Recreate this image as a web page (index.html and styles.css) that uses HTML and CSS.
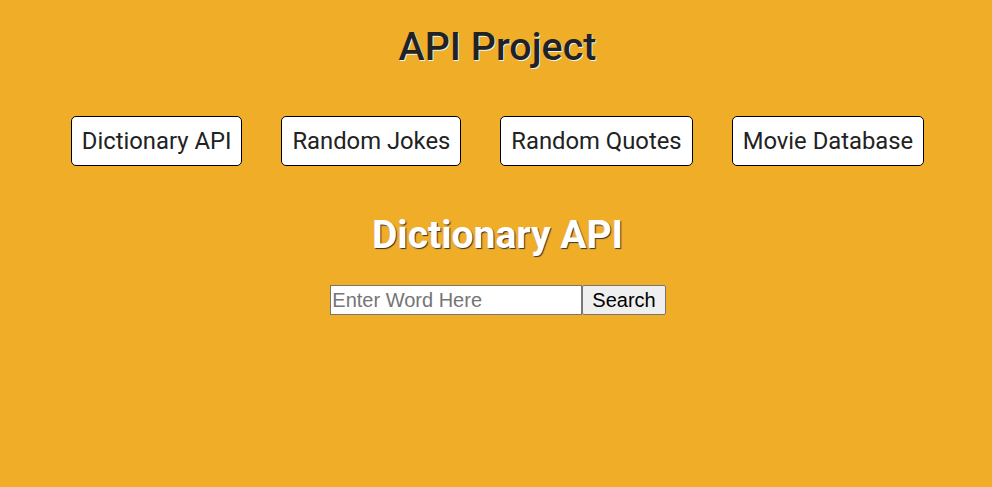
FILE: index.html
```html
<!DOCTYPE html>
<html>
<head>
<meta charset="utf-8">
<link rel="stylesheet" href="styles.css">
</head>
<body>
<h1 class="title">API Project</h1>
<nav class="nav">
  <button class="nav-btn">Dictionary API</button>
  <button class="nav-btn">Random Jokes</button>
  <button class="nav-btn">Random Quotes</button>
  <button class="nav-btn">Movie Database</button>
</nav>
<h2 class="section-title">Dictionary API</h2>
<div class="search">
  <input class="search-input" type="text" placeholder="Enter Word Here"><button class="search-btn">Search</button>
</div>
</body>
</html>
```

FILE: styles.css
```css
html, body {
  margin: 0;
  padding: 0;
  background: #f0ae28;
  height: 100%;
}
body {
  font-family: Roboto, "Liberation Sans", sans-serif;
  text-align: center;
}
.title {
  margin: 0;
  padding-top: 24px;
  padding-left: 3px;
  font-size: 39.4px;
  font-weight: 500;
  line-height: 46px;
  color: #222;
  text-shadow: 1px 1px 0 #e8f4ff;
}
.nav {
  display: flex;
  justify-content: center;
  gap: 39px;
  margin-top: 46px;
  padding-left: 3px;
}
.nav-btn {
  font-family: Roboto, sans-serif;
  font-size: 23.8px;
  line-height: 28px;
  color: #222;
  background: #fff;
  border: 1px solid #000;
  border-radius: 5px;
  padding: 10px 10px;
}
.section-title {
  margin: 46px 0 0;
  padding-left: 3px;
  font-size: 39px;
  line-height: 46px;
  font-weight: 700;
  color: #fff;
  text-shadow: 1px 1px 1px #333;
}
.search {
  display: flex;
  justify-content: center;
  margin-top: 27px;
  padding-left: 4px;
}
.search-input {
  font-family: "Liberation Sans", Arial, sans-serif;
  font-size: 20px;
  width: 248px;
  height: 26px;
  padding: 1px 1px;
  border: 1px solid #767676;
  margin: 0;
  box-sizing: content-box;
}
.search-btn {
  font-family: "Liberation Sans", Arial, sans-serif;
  font-size: 20px;
  margin: 0;
  padding: 1px 9px;
  height: 30px;
  border: 1px solid #767676;
  border-radius: 2px;
  background: #efefef;
  color: #000;
}
```
